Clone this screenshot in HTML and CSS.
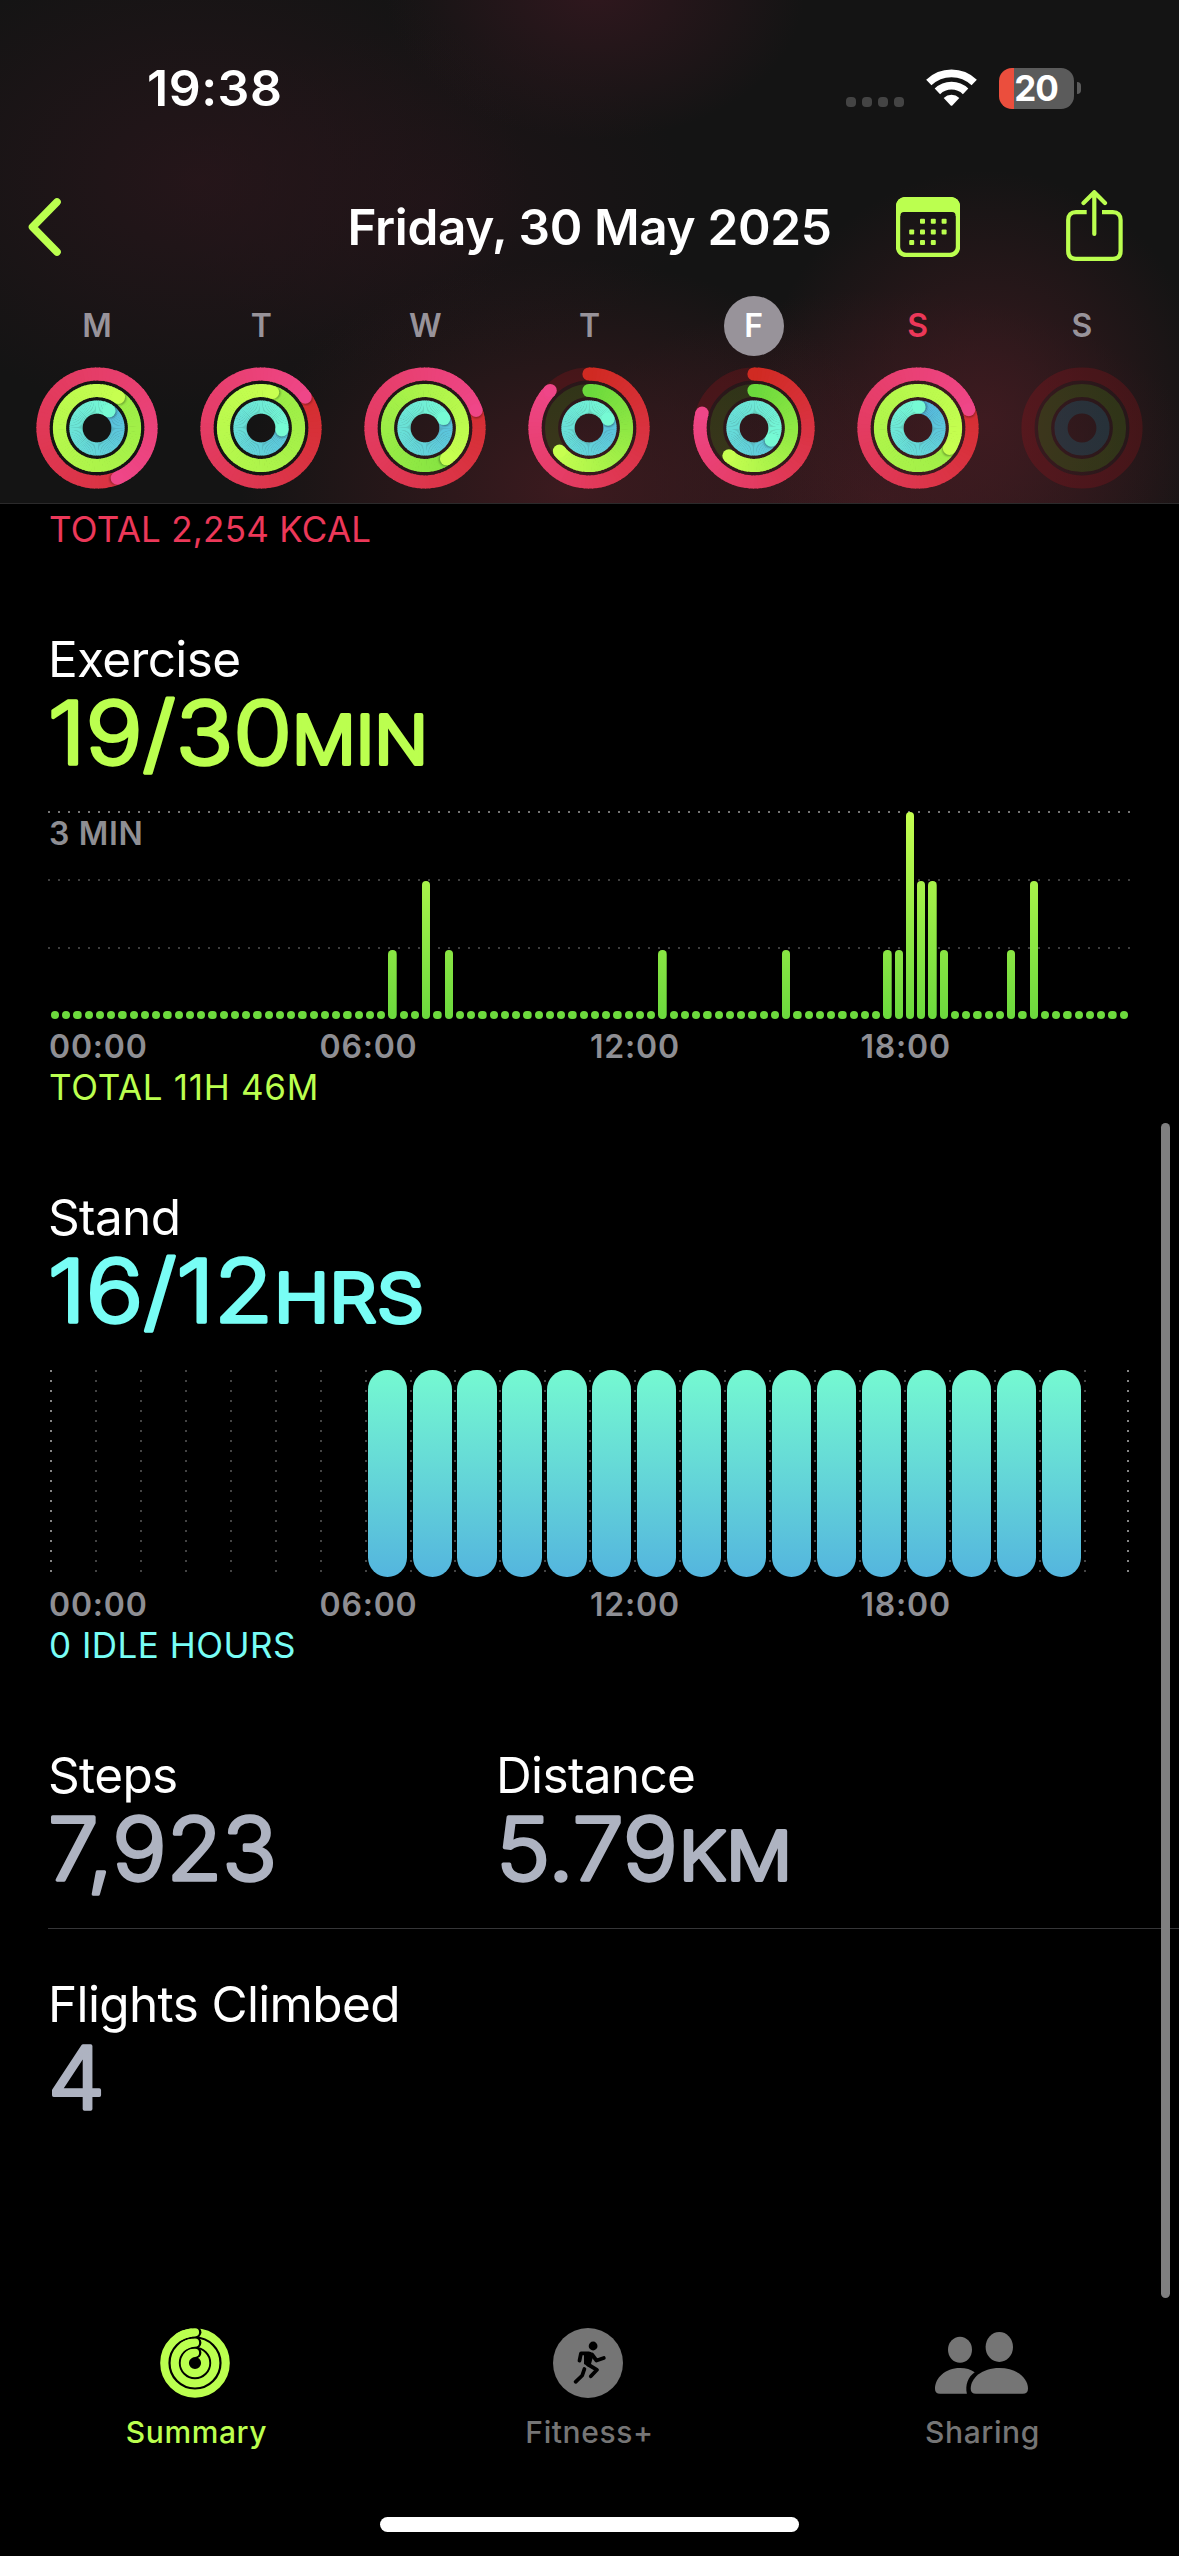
FILE: index.html
```html
<!DOCTYPE html>
<html lang="en">
<head>
  <meta charset="UTF-8">
  <title>Activity</title>
  <link rel="stylesheet" href="styles.css">
</head>
<body>
  <header class="header">
    <div class="status">
      <span class="time">19:38</span>
      <div class="status-icons">
        <div class="signal"><i></i><i></i><i></i><i></i></div>
        <svg class="wifi" width="51" height="38" viewBox="0 0 51 38">
          <path d="M2.8 13.5A32.7 32.7 0 0 1 48.2 13.5" fill="none" stroke="#fff" stroke-width="7.6"/>
          <path d="M11.4 22.4A20.3 20.3 0 0 1 39.6 22.4" fill="none" stroke="#fff" stroke-width="7.8"/>
          <path d="M17.7 28.9A11.5 11.5 0 0 1 33.3 28.9L26.3 36.5Q25.5 37.2 24.7 36.5Z" fill="#fff"/>
        </svg>
        <div class="battery-wrap">
          <div class="battery">20</div>
          <div class="battery-tip"></div>
        </div>
      </div>
    </div>

    <div class="nav">
      <svg class="back" width="36" height="60" viewBox="0 0 36 60">
        <path d="M29 5L4.5 30L29 55" fill="none" stroke="#bbff4f" stroke-width="7.6" stroke-linecap="round" stroke-linejoin="round"/>
      </svg>
      <h1>Friday, 30 May 2025</h1>
      <div class="nav-right">
        <svg width="64" height="60" viewBox="0 0 64 60">
          <rect x="2" y="2" width="60" height="56" rx="8" fill="none" stroke="#bbff4f" stroke-width="4.4"/>
          <path d="M0 19V10Q0 0 10 0H54Q64 0 64 10V19H59.7Q59.7 15 56 15H8Q4.3 15 4.3 19Z" fill="#bbff4f"/>
          <g id="calDots" fill="#bbff4f"></g>
        </svg>
        <svg width="57" height="74" viewBox="0 0 57 74">
          <g fill="none" stroke="#bbff4f" stroke-width="4.2">
            <path d="M20.7 22.2H10Q2.2 22.2 2.2 30V61Q2.2 68.8 10 68.8H46.8Q54.6 68.8 54.6 61V30Q54.6 22.2 46.8 22.2H36"/>
            <path d="M28.3 3V44M17.5 13L28.3 2.2L39 13" stroke-linecap="round" stroke-linejoin="round"/>
          </g>
        </svg>
      </div>
    </div>

    <div class="week" id="week"></div>
  </header>

  <main class="content">
    <p class="total move">TOTAL 2,254 KCAL</p>

    <section class="metric">
      <h2>Exercise</h2>
      <svg class="value exercise" width="500" height="80">
        <text x="0" y="75" class="num" textLength="244" lengthAdjust="spacingAndGlyphs">19/30</text>
        <text x="244" y="75" class="unit" textLength="136" lengthAdjust="spacingAndGlyphs">MIN</text>
      </svg>
      <div class="chart minutes">
        <div class="hline top"></div>
        <div class="hline"></div>
        <div class="hline"></div>
        <span class="scale">3 MIN</span>
        <div class="bars" id="minuteBars"></div>
      </div>
      <div class="axis"><span>00:00</span><span>06:00</span><span>12:00</span><span>18:00</span></div>
      <p class="total exercise">TOTAL 11H 46M</p>
    </section>

    <section class="metric">
      <h2>Stand</h2>
      <svg class="value stand" width="500" height="80">
        <text x="0" y="75" class="num" textLength="225" lengthAdjust="spacingAndGlyphs">16/12</text>
        <text x="226" y="75" class="unit" textLength="150" lengthAdjust="spacingAndGlyphs">HRS</text>
      </svg>
      <div class="chart hours" id="hourBars"></div>
      <div class="axis"><span>00:00</span><span>06:00</span><span>12:00</span><span>18:00</span></div>
      <p class="total stand">0 IDLE HOURS</p>
    </section>

    <section class="metric pair">
      <div>
        <h2>Steps</h2>
        <svg class="value plain" width="400" height="80">
          <text x="0" y="75" class="num" textLength="229" lengthAdjust="spacingAndGlyphs">7,923</text>
        </svg>
      </div>
      <div>
        <h2>Distance</h2>
        <svg class="value plain" width="400" height="80">
          <text x="0" y="75" class="num" textLength="182" lengthAdjust="spacingAndGlyphs">5.79</text>
          <text x="183" y="75" class="unit" textLength="113" lengthAdjust="spacingAndGlyphs">KM</text>
        </svg>
      </div>
    </section>

    <section class="metric flights">
      <h2>Flights Climbed</h2>
      <svg class="value plain" width="400" height="80">
        <text x="0" y="75" class="num" textLength="57" lengthAdjust="spacingAndGlyphs">4</text>
      </svg>
    </section>
  </main>

  <nav class="tabs">
    <div class="tab active">
      <svg width="70" height="70" viewBox="0 0 70 70" fill="none" stroke="#bbff4f" stroke-width="8.2" stroke-linecap="round">
        <circle cx="35" cy="35" r="30.7"/>
        <circle cx="35" cy="35" r="20.3"/>
        <circle cx="35" cy="35" r="10.2"/>
        <g fill="#000" stroke="none">
          <circle cx="35.8" cy="4.3" r="5.6"/>
          <circle cx="35.8" cy="14.7" r="5.6"/>
          <circle cx="35.8" cy="24.8" r="5.6"/>
        </g>
        <path d="M19.65 8.41A30.7 30.7 0 0 1 35 4.3M24.85 17.42A20.3 20.3 0 0 1 35 14.7M27 28.7A10.2 10.2 0 0 1 35 24.8"/>
      </svg>
      <span>Summary</span>
    </div>
    <div class="tab">
      <svg width="70" height="70" viewBox="0 0 70 70">
        <circle cx="35" cy="35" r="35" fill="#757575"/>
        <circle cx="40.1" cy="18" r="4.4"/>
        <g fill="none" stroke="#000" stroke-width="3.8" stroke-linecap="round" stroke-linejoin="round">
          <path d="M36 25.3H28L26.5 32.6"/>
          <path d="M39 26.5L43.5 32.5L50.8 30"/>
          <path d="M35 36.5L44 41.8L37.8 48.3"/>
          <path d="M31.4 41L29.2 47.5L22.6 53.8"/>
        </g>
        <path d="M31 24H38L40.5 27L38 36L36 39L31 36Z"/>
      </svg>
      <span>Fitness+</span>
    </div>
    <div class="tab">
      <svg width="93" height="70" viewBox="0 -4 93 70" fill="#757575">
        <ellipse cx="25" cy="17.7" rx="12" ry="13"/>
        <ellipse cx="64.3" cy="15" rx="13.7" ry="15"/>
        <path d="M5 61.7Q0 61.7 0 57C0 46 10 36 25 36C31 36 36 37.5 39.7 40.3C33 45 30 53 31.9 61.7Z"/>
        <path d="M41 61.7Q35.7 61.7 35.7 56.7C35.7 46 47 36 64.3 36S93 46 93 56.7Q93 61.7 87.7 61.7Z"/>
      </svg>
      <span>Sharing</span>
    </div>
  </nav>
  <div class="home"></div>
  <div class="scrollbar"></div>

  <script>
    // degrees covered by move / exercise / stand, 360 = goal reached
    const days = [
      { d: 'M', rings: [518, 755, 395] },
      { d: 'T', rings: [415, 738, 455] },
      { d: 'W', rings: [431, 505, 423] },
      { d: 'T', rings: [314, 232, 425] },
      { d: 'F', rings: [286, 222, 485], selected: true },
      { d: 'S', rings: [430, 843, 363], today: true },
      { d: 'S', rings: [0, 0, 0] }
    ];
    const styles = [
      { r: 54, from: [208, 42, 34], to: [239, 70, 136], track: 'rgba(225,20,30,.17)' },
      { r: 37.5, from: [107, 217, 60], to: [199, 255, 80], track: 'rgba(80,170,20,.2)' },
      { r: 21, from: [84, 182, 222], to: [118, 250, 212], track: 'rgba(30,110,130,.3)' }
    ];

    function point(r, deg) {
      const a = (deg - 90) * Math.PI / 180;
      return [(61 + r * Math.cos(a)).toFixed(2), (61 + r * Math.sin(a)).toFixed(2)];
    }

    function mix(s, t) {
      return 'rgb(' + s.from.map((c, i) => Math.round(c + (s.to[i] - c) * t)).join(',') + ')';
    }

    function ring(s, total) {
      const R = s.r;
      let out = '';
      if (total < 360) {
        out += `<circle cx="61" cy="61" r="${R}" fill="none" stroke="${s.track}" stroke-width="13.2"/>`;
      }
      if (!total) return out;
      const start = Math.max(0, total - 360);
      if (start === 0) {
        const [x, y] = point(R, 0);
        out += `<circle cx="${x}" cy="${y}" r="6.6" fill="${mix(s, 0)}"/>`;
      }
      let head = '';
      for (let a = start; a < total; a += 4) {
        const end = Math.min(a + 5, total);
        const [x1, y1] = point(R, a), [x2, y2] = point(R, end);
        const seg = `<path d="M${x1} ${y1}A${R} ${R} 0 0 1 ${x2} ${y2}" fill="none" stroke="${mix(s, a / total)}" stroke-width="13.2"/>`;
        if (a > total - 24) head += seg; else out += seg;
      }
      const [hx, hy] = point(R, total);
      if (total > 360) {
        // soft shadow just ahead of the tip
        const [sx, sy] = point(R, total + 90 / R);
        out += `<circle cx="${sx}" cy="${sy}" r="6.3" fill="#000" opacity=".35" filter="url(#soft)"/>`;
      }
      return out + head + `<circle cx="${hx}" cy="${hy}" r="6.6" fill="${mix(s, 1)}"/>`;
    }

    document.getElementById('week').innerHTML = days.map(day => `
      <div class="day">
        <span class="letter${day.selected ? ' selected' : ''}${day.today ? ' today' : ''}">${day.d}</span>
        <svg width="122" height="122" viewBox="0 0 122 122">
          <defs><filter id="soft"><feGaussianBlur stdDeviation="1"/></filter></defs>
          ${styles.map((s, i) => ring(s, day.rings[i])).join('')}
        </svg>
      </div>`).join('');

    // calendar icon dots
    let dots = '';
    for (let row = 0; row < 3; row++) {
      for (let col = 0; col < 4; col++) {
        if ((row === 0 && col === 0) || (row === 2 && col === 3)) continue;
        dots += `<rect x="${13.2 + col * 10.8}" y="${21.8 + row * 10.6}" width="5" height="5" rx="1"/>`;
      }
    }
    document.getElementById('calDots').innerHTML = dots;

    // exercise minutes per quarter of an hour
    const minutes = { 30: 1, 33: 2, 35: 1, 54: 1, 65: 1, 74: 1, 75: 1, 76: 3, 77: 2, 78: 2, 79: 1, 85: 1, 87: 2 };
    let bars = '';
    for (let i = 0; i < 96; i++) {
      bars += `<i style="height:${minutes[i] ? minutes[i] * 69 : 8}px"></i>`;
    }
    document.getElementById('minuteBars').innerHTML = bars;

    let hours = '';
    for (let h = 0; h < 24; h++) {
      hours += `<div class="hour">${h >= 7 && h < 23 ? '<i></i>' : ''}</div>`;
    }
    document.getElementById('hourBars').innerHTML = hours;
  </script>
</body>
</html>
```

FILE: styles.css
```css
* { box-sizing: border-box; margin: 0; padding: 0; }
body {
  width: 1179px; height: 2556px; overflow: hidden; position: relative;
  display: flex; flex-direction: column;
  background: #000; color: #fff;
  font-family: Inter, "Liberation Sans", sans-serif;
}
svg { display: block; flex: none; }

/* header */
.header {
  height: 504px; border-bottom: 1px solid #2b2a2b;
  background:
    radial-gradient(ellipse 210px 150px at 595px -10px, rgba(54,24,32,.8), transparent),
    radial-gradient(ellipse 330px 240px at 200px 180px, rgba(44,22,28,.7), transparent),
    radial-gradient(ellipse 260px 170px at 430px 200px, rgba(40,20,26,.5), transparent),
    radial-gradient(ellipse 230px 250px at 985px 420px, rgba(68,28,34,.8), transparent),
    radial-gradient(ellipse 330px 230px at 570px 490px, rgba(64,27,32,.9), transparent),
    radial-gradient(ellipse 340px 210px at 880px 500px, rgba(66,27,33,.75), transparent),
    #141414;
}
.status {
  height: 176px; padding: 0 98px 0 147px;
  display: flex; align-items: center; justify-content: space-between;
}
.time { font-size: 50px; font-weight: 600; letter-spacing: .5px; }
.status-icons { display: flex; align-items: center; gap: 22px; }
.signal { display: flex; gap: 6px; margin-top: 27px; }
.signal i { width: 10px; height: 10px; border-radius: 4px; background: #444; }
.battery-wrap { display: flex; align-items: center; gap: 3px; }
.battery {
  width: 75px; height: 41px; border-radius: 13px; padding-right: 1px;
  background: linear-gradient(90deg, #eb4e3d 15px, #5b5b5b 15px);
  font-size: 35px; font-weight: 700; line-height: 41px; text-align: center; letter-spacing: -1px;
}
.battery-tip { width: 4px; height: 12px; border-radius: 0 4px 4px 0; background: #5b5b5b; }

.nav {
  height: 102px; padding: 0 56px;
  display: grid; grid-template-columns: 1fr auto 1fr; align-items: center;
}
.back { margin-left: -28px; }
.nav h1 { font-size: 49.5px; font-weight: 600; letter-spacing: -.35px; white-space: nowrap; }
.nav-right { display: flex; justify-content: flex-end; align-items: center; gap: 106px; }

.week { display: flex; padding: 18px 15px 0; }
.day { flex: 1; display: flex; flex-direction: column; align-items: center; gap: 11px; }
.letter {
  width: 60px; height: 60px; border-radius: 50%;
  font-size: 32px; font-weight: 600; line-height: 60px; text-align: center; color: #98939a;
}
.letter.selected { background: #98939a; color: #fff; }
.letter.today { color: #ec3859; }

/* metrics */
.content { flex: 1; padding: 7px 0 0 48px; }
.total { font-size: 35px; line-height: 36px; letter-spacing: .25px; white-space: nowrap; }
.metric { margin-top: 82px; }
.metric h2 { font-size: 49.5px; font-weight: 400; line-height: 60px; letter-spacing: -.65px; white-space: nowrap; }
.move { color: #ec3859; }
.exercise { color: #bbff4f; }
.stand { color: #78fdf5; }
.plain { color: #aeb3c1; }
.value { overflow: visible; }
.value text {
  fill: currentColor; stroke: currentColor; stroke-width: 3.4px; stroke-linejoin: round;
  font-weight: 300;
}
.num { font-size: 86px; }
.value .unit { font-size: 67px; stroke-width: 4px; }

.chart { height: 208px; margin-top: 42px; }
.minutes { width: 1084px; position: relative; }
.hline {
  height: 2px; margin-bottom: 66px;
  background: repeating-linear-gradient(90deg, #3e3e3e 0 2px, transparent 2px 10px);
}
.hline.top { background: repeating-linear-gradient(90deg, #757575 0 2px, transparent 2px 10px); }
.scale {
  position: absolute; left: 1px; top: 4px;
  font-size: 32px; font-weight: 600; line-height: 38px; letter-spacing: .7px; color: #8e8e93;
}
.bars {
  position: absolute; left: 2.8px; right: 3.8px; top: 0; bottom: 0;
  display: flex; justify-content: space-between; align-items: flex-end;
}
.bars i {
  width: 8.4px; border-radius: 4.2px;
  background: linear-gradient(#c6ff50, #6bd93d) bottom / 100% 208px;
}
.axis { display: flex; margin-top: 9px; padding-left: 1px; }
.axis span { width: 270.5px; font-size: 32px; font-weight: 600; line-height: 38px; color: #8e8e93; letter-spacing: .8px; }
.metric .total { margin-top: 3px; padding-left: 1px; }
.metric .total.exercise { letter-spacing: .7px; }
.metric .total.stand { letter-spacing: .5px; }
.move { padding-left: 1px; }

.hours { display: flex; width: 1080.6px; padding: 1px 0 0 2px; }
.hour {
  flex: 1; height: 207px; padding-left: 3px;
  background: repeating-linear-gradient(#444 0 2px, transparent 2px 10px) 0 0 / 2px 203px no-repeat;
}
.hour:first-child {
  background: repeating-linear-gradient(#858585 0 2px, transparent 2px 10px) 0 0 / 2px 203px no-repeat;
}
.hour:last-child {
  background:
    repeating-linear-gradient(#444 0 2px, transparent 2px 10px) 0 0 / 2px 203px no-repeat,
    repeating-linear-gradient(#858585 0 2px, transparent 2px 10px) 100% 0 / 2px 203px no-repeat;
}
.hour i {
  display: block; width: 39.2px; height: 207px; border-radius: 19.6px;
  background: linear-gradient(#75f9d1, #54b5de);
}

.pair { display: flex; padding-bottom: 43px; border-bottom: 1px solid #363638; }
.pair > div { width: 448px; }
.flights { margin-top: 45px; }

/* tab bar */
.tabs { display: flex; height: 189px; }
.tab {
  flex: 1; display: flex; flex-direction: column; align-items: center; gap: 16px;
  font-size: 30px; font-weight: 500; line-height: 36px; letter-spacing: .6px; color: #757575;
}
.tab svg { margin-left: -3px; }
.tab.active { color: #bbff4f; }
.home { width: 419px; height: 15px; margin: 0 auto 24px; border-radius: 8px; background: #fff; flex: none; }
.scrollbar {
  position: absolute; left: 1161px; top: 1123px; width: 9px; height: 1175px;
  border-radius: 5px; background: #7f7f80;
}
```
